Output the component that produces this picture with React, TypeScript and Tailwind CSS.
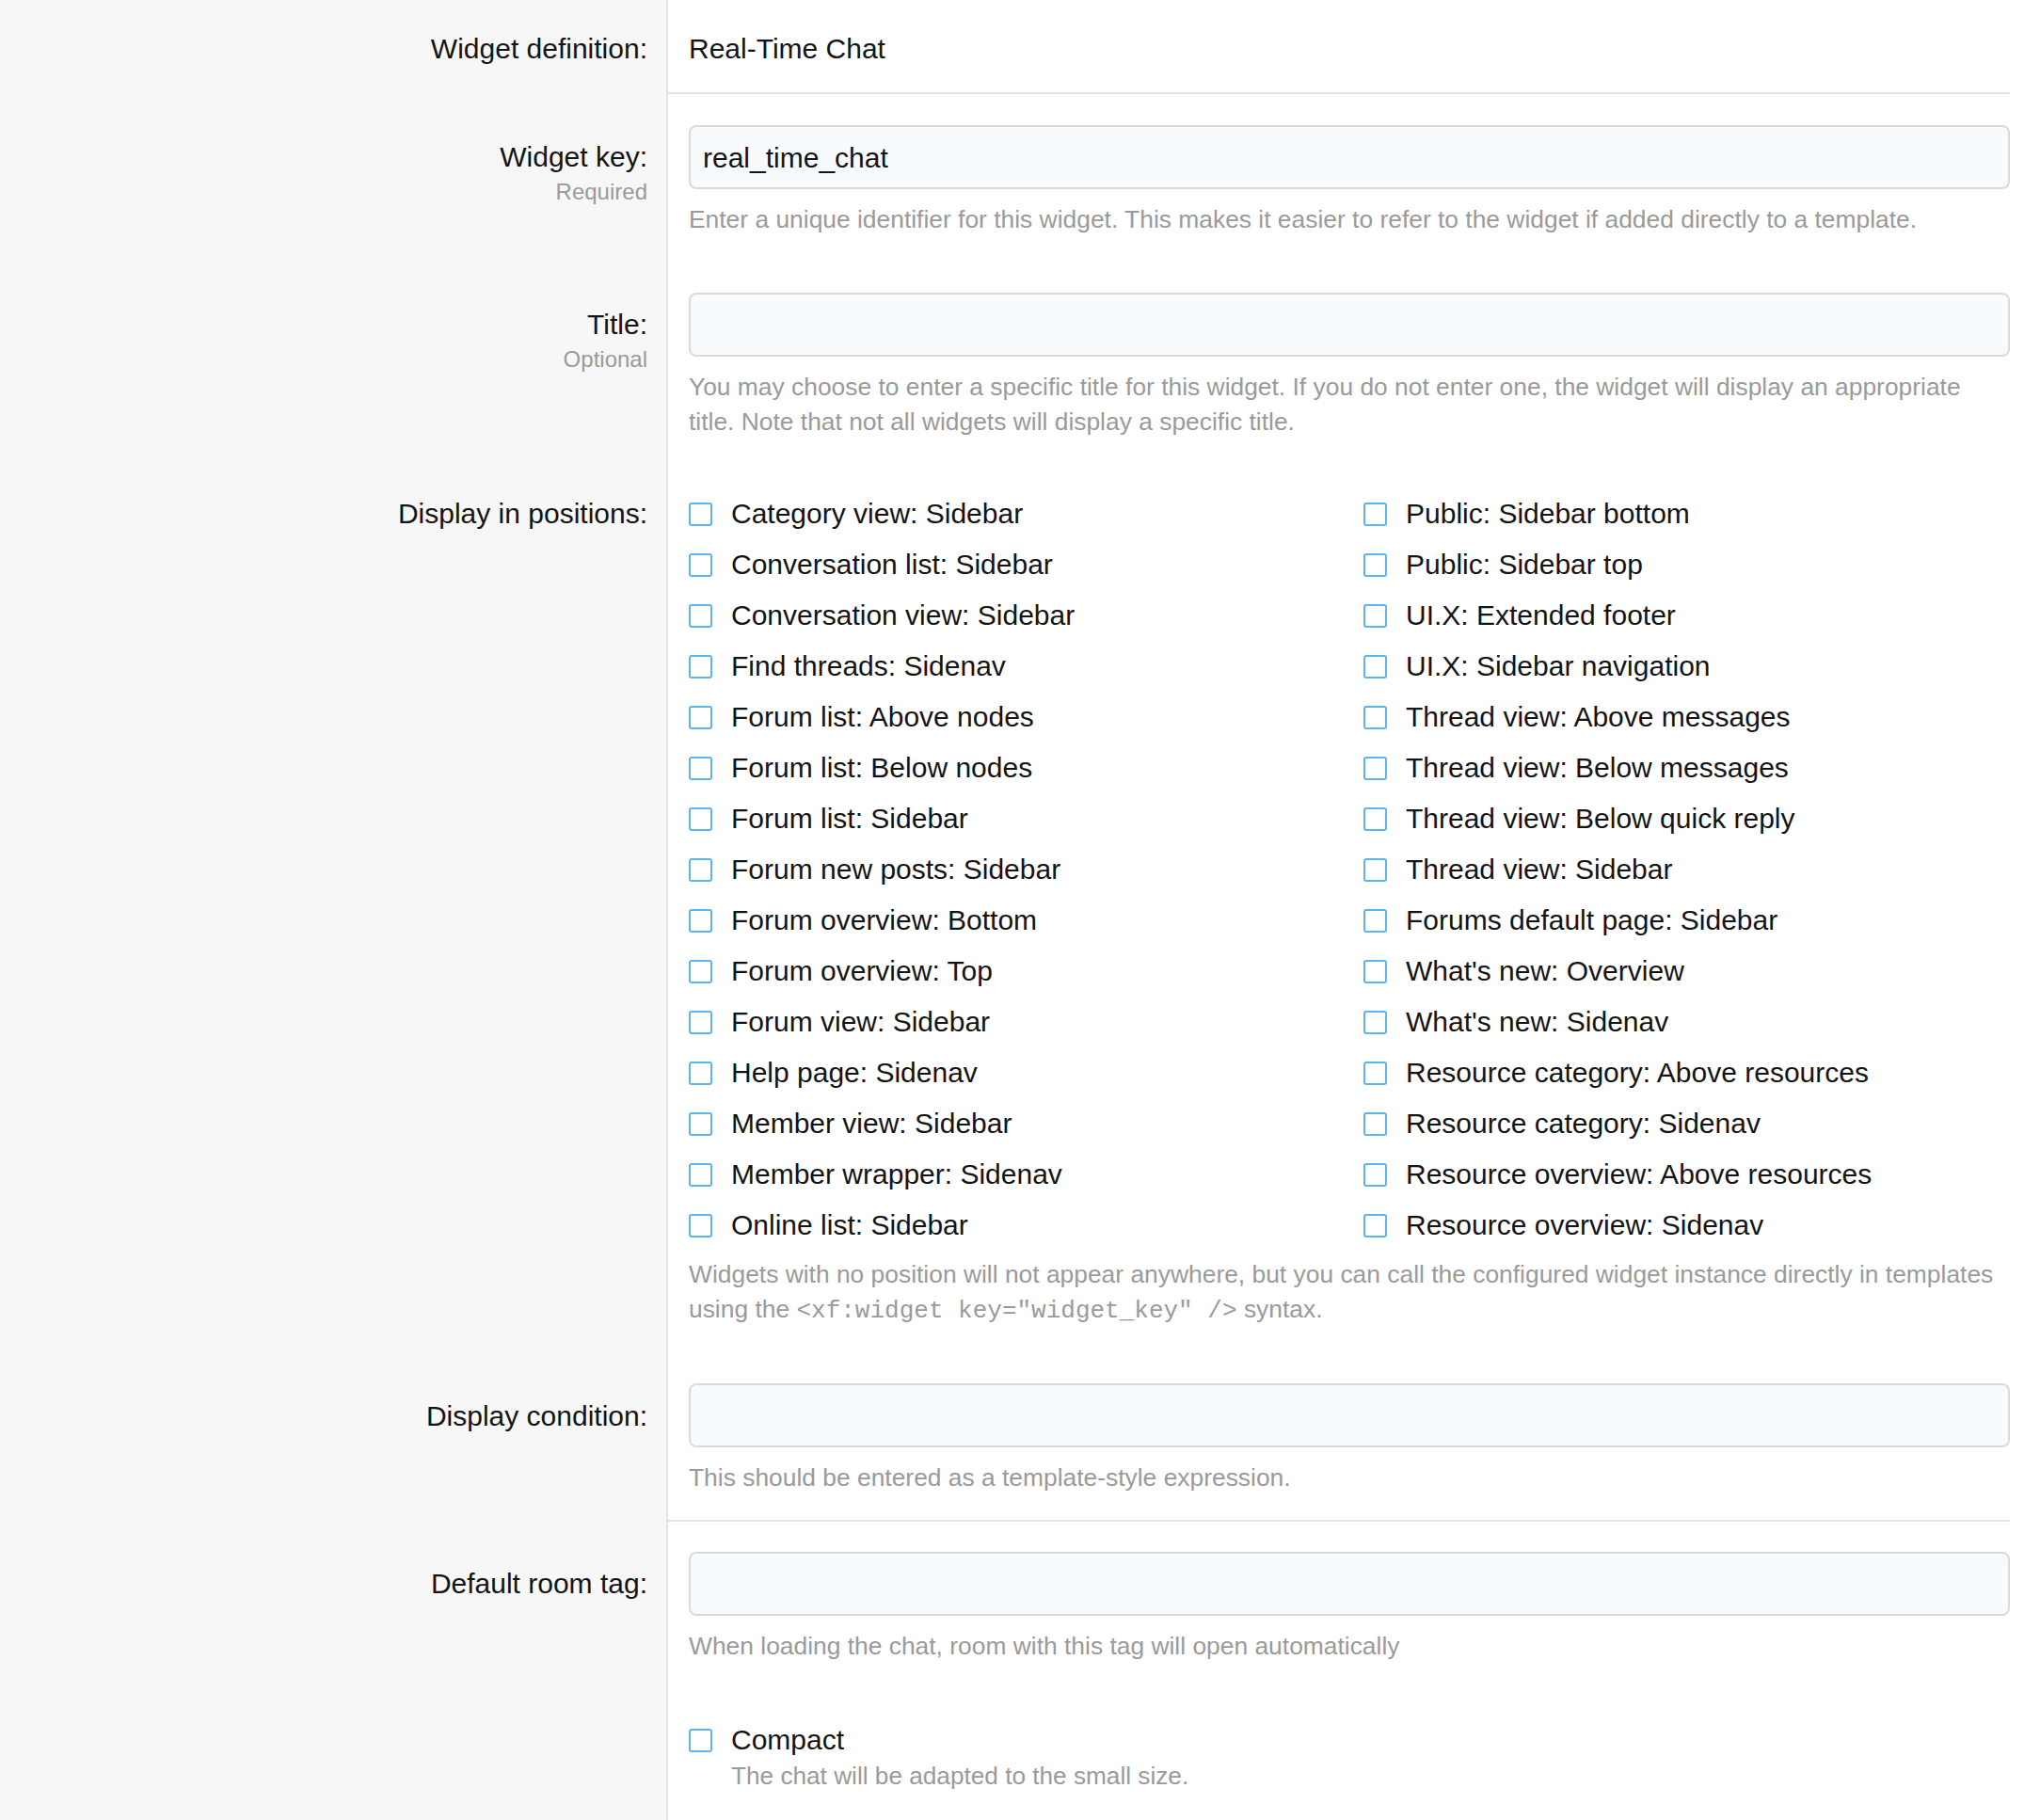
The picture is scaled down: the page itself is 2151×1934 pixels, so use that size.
import React from 'react'

const leftPositions = [
  'Category view: Sidebar',
  'Conversation list: Sidebar',
  'Conversation view: Sidebar',
  'Find threads: Sidenav',
  'Forum list: Above nodes',
  'Forum list: Below nodes',
  'Forum list: Sidebar',
  'Forum new posts: Sidebar',
  'Forum overview: Bottom',
  'Forum overview: Top',
  'Forum view: Sidebar',
  'Help page: Sidenav',
  'Member view: Sidebar',
  'Member wrapper: Sidenav',
  'Online list: Sidebar',
]

const rightPositions = [
  'Public: Sidebar bottom',
  'Public: Sidebar top',
  'UI.X: Extended footer',
  'UI.X: Sidebar navigation',
  'Thread view: Above messages',
  'Thread view: Below messages',
  'Thread view: Below quick reply',
  'Thread view: Sidebar',
  'Forums default page: Sidebar',
  "What's new: Overview",
  "What's new: Sidenav",
  'Resource category: Above resources',
  'Resource category: Sidenav',
  'Resource overview: Above resources',
  'Resource overview: Sidenav',
]

function Checkbox({ label }: { label: string }) {
  return (
    <label className="flex h-[40px] items-center">
      <span className="h-[25px] w-[25px] shrink-0 rounded-[3px] border-2 border-[#5cb5ef] bg-white" />
      <span className="ml-[20px] text-[30px] leading-[40px] text-[#141414]">
        {label}
      </span>
    </label>
  )
}

function Explain({ children }: { children: React.ReactNode }) {
  return (
    <div className="mt-[14px] pr-[8px] text-[26.4px] leading-[37px] text-[#9a9a9a]">
      {children}
    </div>
  )
}

function TextBox({ value }: { value?: string }) {
  return (
    <div className="flex h-[68px] w-full items-center rounded-[8px] border-2 border-[#dadada] bg-[#f8fbfe] pl-[13px] text-[30px] text-[#141414]">
      {value}
    </div>
  )
}

type RowProps = {
  label?: string
  hint?: string
  labelTop?: string
  contentTop?: string
  bottom?: string
  border?: boolean
  children: React.ReactNode
}

function Row({
  label,
  hint,
  labelTop = 'pt-[47px]',
  contentTop = 'pt-[33px]',
  bottom = 'pb-[26px]',
  border,
  children,
}: RowProps) {
  return (
    <div className="flex">
      <div
        className={`w-[710px] shrink-0 border-r-2 border-[#e3e3e3] bg-[#f7f7f7] pr-[20px] text-right ${labelTop}`}
      >
        {label && (
          <div className="text-[30px] leading-[40px] text-[#141414]">
            {label}
          </div>
        )}
        {hint && (
          <div className="mt-[2px] text-[24px] leading-[30px] text-[#9a9a9a]">
            {hint}
          </div>
        )}
      </div>
      <div
        className={`min-w-0 flex-1 pl-[22px] ${contentTop} ${bottom} ${
          border ? 'border-b-2 border-[#e3e3e3]' : ''
        }`}
      >
        {children}
      </div>
    </div>
  )
}

export default function App() {
  return (
    <div className="min-h-[1934px] bg-white font-['Liberation_Sans',Arial,sans-serif]">
      <div className="w-[2136px]">
        <Row
          label="Widget definition:"
          labelTop="pt-[32px]"
          contentTop="pt-[32px]"
          bottom="pb-[26px]"
          border
        >
          <div className="text-[30px] leading-[40px] text-[#141414]">
            Real-Time Chat
          </div>
        </Row>

        <Row label="Widget key:" hint="Required">
          <TextBox value="real_time_chat" />
          <Explain>
            Enter a unique identifier for this widget. This makes it easier to
            refer to the widget if added directly to a template.
          </Explain>
        </Row>

        <Row label="Title:" hint="Optional">
          <TextBox />
          <Explain>
            You may choose to enter a specific title for this widget. If you do
            not enter one, the widget will display an appropriate title. Note
            that not all widgets will display a specific title.
          </Explain>
        </Row>

        <Row label="Display in positions:" labelTop="pt-[33px]">
          <div className="flex gap-x-[30px]">
            <div className="flex flex-1 flex-col gap-y-[14px]">
              {leftPositions.map((p) => (
                <Checkbox key={p} label={p} />
              ))}
            </div>
            <div className="flex flex-1 flex-col gap-y-[14px]">
              {rightPositions.map((p) => (
                <Checkbox key={p} label={p} />
              ))}
            </div>
          </div>
          <Explain>
            Widgets with no position will not appear anywhere, but you can call
            the configured widget instance directly in templates using the{' '}
            <code className="font-['Liberation_Mono',monospace] text-[26px] leading-none">
              {'<xf:widget key="widget_key" />'}
            </code>{' '}
            syntax.
          </Explain>
        </Row>

        <Row
          label="Display condition:"
          labelTop="pt-[49px]"
          contentTop="pt-[34px]"
          border
        >
          <TextBox />
          <Explain>This should be entered as a template-style expression.</Explain>
        </Row>

        <Row
          label="Default room tag:"
          labelTop="pt-[46px]"
          contentTop="pt-[32px]"
        >
          <TextBox />
          <Explain>
            When loading the chat, room with this tag will open automatically
          </Explain>
        </Row>

        <Row contentTop="pt-[35px]" bottom="pb-[60px]">
          <Checkbox label="Compact" />
          <div className="pl-[45px] text-[26.2px] leading-[37px] text-[#9a9a9a]">
            The chat will be adapted to the small size.
          </div>
        </Row>
      </div>
    </div>
  )
}
